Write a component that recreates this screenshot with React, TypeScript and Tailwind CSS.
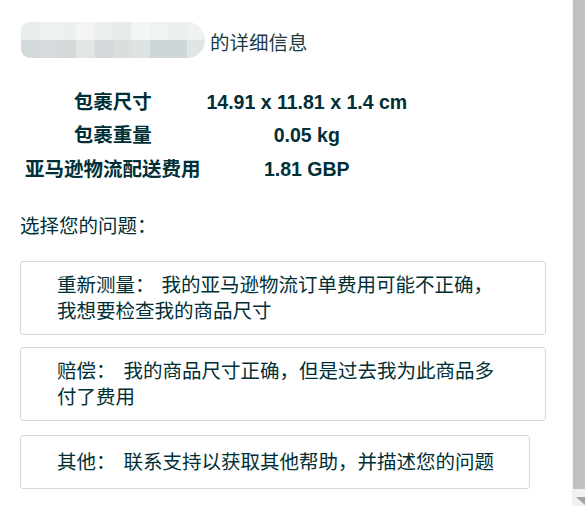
import React from "react";

const topRow = [
  "bg-[#e9eded]",
  "bg-[#eef1f1]",
  "bg-[#edf0f0]",
  "bg-[#f3f5f5]",
  "bg-[#eaeeee]",
  "bg-[#e6ebeb]",
  "bg-[#f4f6f6]",
  "bg-[#f0f3f3]",
  "bg-[#ebefef]",
  "bg-[#eef1f1]",
];
const bottomRow = [
  "bg-[#d2d9da]",
  "bg-[#d6dcdd]",
  "bg-[#d4dada]",
  "bg-[#e0e5e5]",
  "bg-[#d3d9da]",
  "bg-[#d9dfdf]",
  "bg-[#dde2e2]",
  "bg-[#cfd6d7]",
  "bg-[#cfd6d7]",
  "bg-[#dfe4e4]",
];

function Mosaic() {
  return (
    <div className="grid h-[36px] w-[184px] grid-cols-10 grid-rows-2 overflow-hidden rounded-l-[9px] rounded-r-[18px]">
      {topRow.map((c, i) => (
        <div key={"t" + i} className={c} />
      ))}
      {bottomRow.map((c, i) => (
        <div key={"b" + i} className={c} />
      ))}
    </div>
  );
}

const rows = [
  ["包裹尺寸", "14.91 x 11.81 x 1.4 cm"],
  ["包裹重量", "0.05 kg"],
  ["亚马逊物流配送费用", "1.81 GBP"],
];

export default function App() {
  return (
    <div
      className="flex h-[506px] w-[585px] overflow-hidden bg-white text-[#002f36]"
      style={{ fontFamily: '"Liberation Sans", "Noto Sans CJK SC", sans-serif' }}
    >
      <div className="flex-1 pl-[20px] pt-[22px]">
        <div className="flex items-center">
          <div className="ml-[1px]">
            <Mosaic />
          </div>
          <span className="ml-[5px] pt-[6px] text-[19.5px] leading-[26px] text-[#1d3a3f]">
            的详细信息
          </span>
        </div>

        <table className="mt-[28px] border-collapse">
          <tbody>
            {rows.map(([k, v]) => (
              <tr key={k}>
                <td className="pl-[5px] pr-[3px] text-center text-[19.5px] font-bold leading-[33.3px]">
                  {k}
                </td>
                <td className="pl-[3px] pr-[5px] text-center text-[19.5px] font-bold leading-[33.3px]">
                  {v}
                </td>
              </tr>
            ))}
          </tbody>
        </table>

        <div className="mt-[27px] text-[19.5px] leading-[26.67px]">选择您的问题：</div>

        <div className="mt-[21px] flex flex-col items-start text-[19.5px] leading-[26px]">
          <div className="w-[526px] rounded-[3px] border border-[#d5d9d9] py-[10px] pl-[36px] pr-[20px]">
            重新测量：<span className="ml-[7px]">我的亚马逊物流订单费用可能不正确，</span>
            <br />
            我想要检查我的商品尺寸
          </div>
          <div className="mt-[12px] w-[526px] rounded-[3px] border border-[#d5d9d9] py-[10px] pl-[36px] pr-[20px]">
            赔偿：<span className="ml-[8px]">我的商品尺寸正确，但是过去我为此商品多</span>
            <br />
            付了费用
          </div>
          <div className="mt-[14px] w-fit rounded-[3px] border border-[#d5d9d9] py-[13px] pl-[36px] pr-[35px]">
            其他：<span className="ml-[8px]">联系支持以获取其他帮助，并描述您的问题</span>
          </div>
        </div>
      </div>

      <div className="flex w-[13px] flex-col bg-[#f1f1f1]">
        <div className="ml-[1px] h-[489px] bg-[#c1c1c1]" />
        <div className="flex flex-1 items-end justify-end">
          <svg width="9" height="8" viewBox="0 0 9 8" className="mb-[1px]">
            <polygon points="0,0 9,0 9,8" fill="#a3a3a3" />
          </svg>
        </div>
      </div>
    </div>
  );
}
